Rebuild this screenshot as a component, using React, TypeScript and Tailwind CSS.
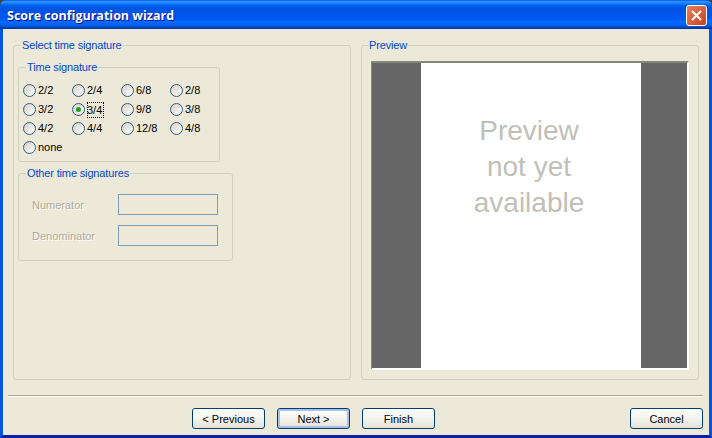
const rows = [
  ['2/2', '2/4', '6/8', '2/8'],
  ['3/2', '3/4', '9/8', '3/8'],
  ['4/2', '4/4', '12/8', '4/8'],
  ['none'],
];

const Radio = ({ label }: { label: string }) => {
  const checked = label === '3/4';
  return (
    <div className="flex items-center gap-[2px] h-[19px]">
      <span className="w-[13px] h-[13px] shrink-0 rounded-full border border-[#2f5d85] bg-gradient-to-br from-[#d4d1c4] to-white flex items-center justify-center">
        {checked && <span className="w-[5px] h-[5px] rounded-full bg-[#21a121]" />}
      </span>
      <span className={checked ? 'leading-[16px] pr-[2px] outline-1 outline-dotted outline-black -outline-offset-1' : ''}>{label}</span>
    </div>
  );
};

const Button = ({ label, focused, className }: { label: string; focused?: boolean; className?: string }) => (
  <button
    type="button"
    className={`w-[73px] h-[21px] rounded-[3px] border border-[#003c74] bg-gradient-to-b from-white via-[#f3f3ee] to-[#e4e1d8] text-black text-center leading-[21px] ${focused ? 'shadow-[inset_0_0_0_2px_#a8c0e8]' : ''} ${className ?? ''}`}
  >
    {label}
  </button>
);

const legendClass = 'ml-[7px] px-px text-[#0046d5] leading-[13px] tracking-[-0.15px]';
const groupClass = 'border border-[#d0d0bf] rounded-[3px]';

export default function App() {
  return (
    <div className="w-[712px] h-[438px] flex flex-col bg-[#404040] overflow-hidden text-[11px] font-['Liberation_Sans',sans-serif] text-black">
      <div className="h-[29px] shrink-0 rounded-t-[6px] bg-[linear-gradient(180deg,#0058ee_0%,#3593ff_6%,#127dff_12%,#0262ee_18%,#0054e3_28%,#0055eb_56%,#005bf5_66%,#026afe_76%,#0062ef_86%,#0052d6_92%,#0040ab_96%,#003092_100%)] flex items-center justify-between pl-[7px] pr-[5px] pt-[1px]">
        <span className="text-white font-bold text-[12.5px] pt-[3px] font-['Open_Sans',sans-serif] [text-shadow:1px_1px_#0f1089]">Score configuration wizard</span>
        <div className="w-[21px] h-[21px] rounded-[3px] border border-white bg-gradient-to-br from-[#e8805c] to-[#c8401c] flex items-center justify-center">
          <svg width="11" height="11" viewBox="0 0 11 11" fill="none" stroke="white" strokeWidth="2">
            <path d="M1 1l9 9M10 1l-9 9" />
          </svg>
        </div>
      </div>

      <div className="flex-1 flex flex-col bg-[#ece9d8] border-x-[3px] border-[#0855dd] border-b-[3px] border-b-[#0a1fa8] px-[5px]">
        <div className="flex gap-[10px] pt-[10px] pl-[5px] pr-[1px] h-[352px]">
          <fieldset className={`w-[338px] h-[341px] ${groupClass}`}>
            <legend className={legendClass}>Select time signature</legend>
            <div className="pl-[4px] pt-[9px]">
              <fieldset className={`w-[201px] h-[101px] ${groupClass}`}>
                <legend className={legendClass}>Time signature</legend>
                <div className="grid grid-cols-[49px_49px_49px_49px] mt-[7px] pl-[4px]">
                  {rows.flat().map((label) => (
                    <Radio key={label} label={label} />
                  ))}
                </div>
              </fieldset>
              <fieldset className={`w-[215px] h-[94px] mt-[5px] ${groupClass}`}>
                <legend className={legendClass}>Other time signatures</legend>
                <div className="flex flex-col gap-[10px] mt-[14px] pl-[13px]">
                  {['Numerator', 'Denominator'].map((label) => (
                    <div key={label} className="flex items-center">
                      <span className="w-[86px] pt-[2px] text-[#aca899] [text-shadow:1px_1px_white]">{label}</span>
                      <div className="w-[100px] h-[21px] border border-[#7f9db9] bg-[#ece9d8]" />
                    </div>
                  ))}
                </div>
              </fieldset>
            </div>
          </fieldset>

          <fieldset className={`w-[338px] h-[341px] ${groupClass}`}>
            <legend className="ml-[6px] px-px text-[#0046d5] leading-[13px] tracking-[-0.15px]">Preview</legend>
            <div className="mx-[9px] mt-[9px] h-[309px] border-t-2 border-l border-t-[#85877a] border-l-[#85877a] border-r-2 border-b-2 border-r-white border-b-white bg-[#666666] flex">
              <div className="ml-[49px] w-[220px] bg-white flex flex-col items-center pt-[50px] pr-[4px] text-[#c0bfb8] text-[28px] leading-[36px]">
                <span>Preview</span>
                <span>not yet</span>
                <span>available</span>
              </div>
            </div>
          </fieldset>
        </div>

        <div className="h-[2px] mt-[14px] mr-[1px] border-t border-[#aca899] bg-white" />

        <div className="flex items-start justify-between mt-[11px]">
          <div className="flex gap-[12px] ml-[184px]">
            <Button label="< Previous" />
            <Button label="Next >" focused />
            <Button label="Finish" />
          </div>
          <Button label="Cancel" className="mr-[1px]" />
        </div>
      </div>
    </div>
  );
}
